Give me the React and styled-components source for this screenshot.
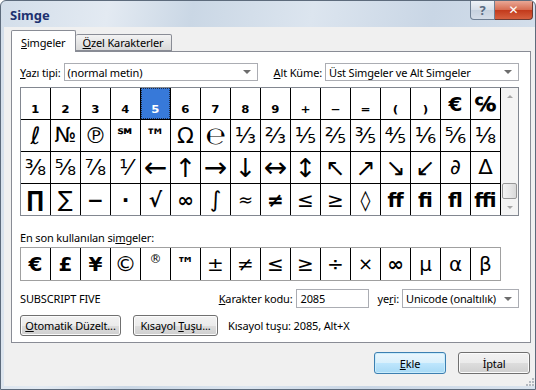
import styled, { createGlobalStyle } from 'styled-components'

const GlobalStyle = createGlobalStyle`
  body {
    margin: 0;
    background: #ffffff;
  }
`

const UI = `"Noto Sans", "DejaVu Sans", sans-serif`
const SYM = `"DejaVu Sans", sans-serif`

const Window = styled.div`
  width: 536px;
  height: 390px;
  box-sizing: border-box;
  display: flex;
  flex-direction: column;
  border: 1px solid #5d6b7c;
  border-radius: 6px 6px 0 0;
  background: linear-gradient(100deg, #d3deea 0%, #e3eaf2 18%, #cad7e5 32%, #dce5ef 52%, #c9d6e5 72%, #d9e3ee 100%);
  font-family: ${UI};
  font-size: 11px;
  letter-spacing: -0.15px;
  color: #000;
  overflow: hidden;
`
const TitleBar = styled.div`
  height: 26px;
  display: flex;
  align-items: flex-start;
  padding-left: 9px;
`
const Title = styled.div`
  margin-top: 5px;
  font-size: 13px;
  font-weight: bold;
  letter-spacing: 0;
  color: #1c3170;
`
const Caption = styled.div`
  margin-left: auto;
  margin-right: 2px;
  display: flex;
`
const HelpButton = styled.div`
  width: 25px;
  height: 19px;
  box-sizing: border-box;
  border: 1px solid #6e7f93;
  border-top: none;
  border-radius: 0 0 0 4px;
  background: linear-gradient(#eef2f7, #d6dee8 50%, #c6d1de 51%, #d4dde8);
  display: flex;
  align-items: center;
  justify-content: center;
  color: #596b82;
  font-size: 13px;
  font-weight: bold;
`
const CloseButton = styled.div`
  width: 38px;
  height: 19px;
  box-sizing: border-box;
  border: 1px solid #6e3a32;
  border-top: none;
  border-left: none;
  border-radius: 0 0 4px 0;
  background: linear-gradient(#e9a795, #d66b50 50%, #c2391b 51%, #d6603f);
  display: flex;
  align-items: center;
  justify-content: center;
  color: #fff;
  font-family: ${SYM};
  font-size: 12px;
  font-weight: bold;
`
const Client = styled.div`
  flex: 1;
  margin: 0 0 3px 3px;
  padding: 4px 4px 0 7px;
  background: #f0f0f0;
  display: flex;
  flex-direction: column;
`
const TabStrip = styled.div`
  display: flex;
  align-items: flex-end;
  height: 21px;
  margin-bottom: -1px;
  position: relative;
  z-index: 1;
`
const Tab = styled.div`
  box-sizing: border-box;
  height: ${(p) => (p.$active ? '22px' : '17px')};
  padding: ${(p) => (p.$active ? '2px 9px 0 9px' : '0 8px 0 7px')};
  margin-bottom: ${(p) => (p.$active ? '0' : '1px')};
  border: 1px solid #898c95;
  border-bottom: ${(p) => (p.$active ? 'none' : '1px solid #898c95')};
  border-left: ${(p) => (p.$active ? '1px solid #898c95' : 'none')};
  background: ${(p) => (p.$active ? '#ffffff' : 'linear-gradient(#f3f3f3, #e6e6e6 50%, #d9d9d9)')};
  display: flex;
  align-items: center;
  border-radius: 2px 2px 0 0;
`
const Panel = styled.div`
  border: 1px solid #898c95;
  background: #ffffff;
  padding: 11px 11px 6px 8px;
  display: flex;
  flex-direction: column;
`
const Row = styled.div`
  display: flex;
  align-items: center;
  height: ${(p) => p.$h || 18}px;
  margin-top: ${(p) => p.$mt || 0}px;
`
const Label = styled.span`
  white-space: nowrap;
  margin-left: ${(p) => (p.$auto ? 'auto' : `${p.$ml || 0}px`)};
  margin-right: ${(p) => p.$mr || 3}px;
  flex: ${(p) => (p.$grow ? 1 : 'none')};
`
const Combo = styled.div`
  box-sizing: border-box;
  width: ${(p) => p.$w}px;
  height: ${(p) => p.$h || 18}px;
  border: 1px solid #abadb3;
  background: #fff;
  display: flex;
  align-items: center;
  justify-content: space-between;
  padding: 0 6px 0 3px;
  white-space: nowrap;
`
const Arrow = styled.span`
  width: 0;
  height: 0;
  border-left: 4px solid transparent;
  border-right: 4px solid transparent;
  border-top: 4px solid #6d6d6d;
`
const Input = styled.div`
  box-sizing: border-box;
  width: ${(p) => p.$w}px;
  height: 19px;
  border: 1px solid #abadb3;
  background: #fff;
  padding: 0 4px;
  display: flex;
  align-items: center;
`
const CharBox = styled.div`
  margin-top: 6px;
  display: flex;
  border: 1px solid #828790;
  height: 129px;
  box-sizing: border-box;
`
const CharGrid = styled.div`
  display: grid;
  grid-template-columns: repeat(16, 29px);
  grid-auto-rows: 31px;
  gap: 1px;
  background: #000;
  border-right: 1px solid #000;
`
const Cell = styled.div`
  background: ${(p) => (p.$sel ? '#3779d9' : '#fff')};
  color: ${(p) => (p.$sel ? '#fff' : '#000')};
  outline: ${(p) => (p.$sel ? '1px dotted #1d2a44' : 'none')};
  outline-offset: -1px;
  display: flex;
  align-items: center;
  justify-content: center;
  font-family: ${SYM};
  font-size: ${(p) => p.$size || 20}px;
  font-weight: ${(p) => (p.$bold ? 'bold' : 'normal')};
  letter-spacing: 0;
  padding-top: ${(p) => p.$pt || 0}px;
  padding-bottom: ${(p) => p.$pb || 0}px;
  box-sizing: border-box;
  line-height: 1;
  overflow: hidden;
`
const Scrollbar = styled.div`
  width: 17px;
  background: #f4f4f4;
  display: flex;
  flex-direction: column;
  align-items: center;
`
const ScrollArrow = styled.div`
  height: 16px;
  display: flex;
  align-items: center;
  justify-content: center;
  &::after {
    content: '';
    border-left: 3px solid transparent;
    border-right: 3px solid transparent;
    ${(p) => (p.$up ? 'border-bottom' : 'border-top')}: 3px solid #a6a6a6;
  }
`
const Track = styled.div`
  flex: 1;
  display: flex;
  flex-direction: column;
  justify-content: flex-end;
`
const Thumb = styled.div`
  width: 15px;
  height: 16px;
  box-sizing: border-box;
  border: 1px solid #979797;
  border-radius: 2px;
  background: linear-gradient(90deg, #f3f3f3, #e8e8e8 50%, #d9d9d9);
`
const RecentLabel = styled.div`
  margin-top: 13px;
  height: 17px;
  display: flex;
  align-items: center;
`
const RecentBar = styled.div`
  margin-top: 1px;
  display: grid;
  grid-template-columns: repeat(16, 29px);
  grid-auto-rows: 32px;
  gap: 1px;
  background: #000;
  border: 1px solid #a0a0a0;
  width: max-content;
`
const Button = styled.div`
  box-sizing: border-box;
  width: ${(p) => p.$w}px;
  height: ${(p) => p.$h || 21}px;
  margin-right: ${(p) => p.$mr || 0}px;
  border: 1px solid ${(p) => (p.$def ? '#3c7fb1' : '#707070')};
  border-radius: 3px;
  box-shadow: inset 0 0 0 1px ${(p) => (p.$def ? '#c9ecfc' : '#fbfbfb')};
  background: ${(p) =>
    p.$def
      ? 'linear-gradient(#eaf6fd, #d9f0fc 50%, #bee6fd 51%, #a7d9f5)'
      : 'linear-gradient(#f2f2f2, #ebebeb 50%, #dddddd 51%, #cfcfcf)'};
  display: flex;
  align-items: center;
  justify-content: center;
  white-space: nowrap;
`
const DialogButtons = styled.div`
  margin-top: 9px;
  display: flex;
  justify-content: flex-end;
  gap: 12px;
  padding-right: 1px;
`
const Grip = styled.svg`
  align-self: flex-end;
  margin-top: auto;
  margin-right: -3px;
`

const row1 = ['₁', '₂', '₃', '₄', '₅', '₆', '₇', '₈', '₉', '₊', '₋', '₌', '₍', '₎']
// [glyph, size, bold]
const rows = [
  ['ℓ', 24], ['№', 21], ['℗', 22], ['℠', 20, 1], ['™', 20, 1], ['Ω', 22], ['℮', 24], ['⅓', 22],
  ['⅔', 22], ['⅕', 22], ['⅖', 22], ['⅗', 22], ['⅘', 22], ['⅙', 22], ['⅚', 22], ['⅛', 22],
  ['⅜', 22], ['⅝', 22], ['⅞', 22], ['⅟', 22], ['←', 28], ['↑', 26], ['→', 28], ['↓', 26],
  ['↔', 28], ['↕', 26], ['↖', 24], ['↗', 24], ['↘', 24], ['↙', 24], ['∂', 21], ['∆', 21],
  ['∏', 22, 1], ['∑', 22], ['−', 20, 1], ['∙', 20, 1], ['√', 20, 1], ['∞', 20, 1], ['∫', 22], ['≈', 18],
  ['≠', 20, 1], ['≤', 20], ['≥', 20], ['◊', 20, 1], ['ﬀ', 20, 1], ['ﬁ', 20, 1], ['ﬂ', 20, 1], ['ﬃ', 20, 1],
]
const recent = [
  ['€', 20, 1], ['£', 20, 1], ['¥', 20, 1], ['©', 22], ['®', 12, 0, 10], ['™', 18, 1], ['±', 20], ['≠', 20],
  ['≤', 20], ['≥', 20], ['÷', 20], ['×', 18], ['∞', 20, 1], ['µ', 20], ['α', 20], ['β', 20],
]

function App() {
  return (
    <Window>
      <GlobalStyle />
      <TitleBar>
        <Title>Simge</Title>
        <Caption>
          <HelpButton>?</HelpButton>
          <CloseButton>✕</CloseButton>
        </Caption>
      </TitleBar>
      <Client>
        <TabStrip>
          <Tab $active>
            <span><u>S</u>imgeler</span>
          </Tab>
          <Tab>
            <span><u>Ö</u>zel Karakterler</span>
          </Tab>
        </TabStrip>
        <Panel>
          <Row>
            <Label><u>Y</u>azı tipi:</Label>
            <Combo $w={194}>
              (normal metin)
              <Arrow />
            </Combo>
            <Label $auto><u>A</u>lt Küme:</Label>
            <Combo $w={194}>
              Üst Simgeler ve Alt Simgeler
              <Arrow />
            </Combo>
          </Row>
          <CharBox>
            <CharGrid>
              {row1.map((c, i) => (
                <Cell key={'a' + i} $size={19} $pt={5} $bold $sel={i === 4}>
                  {c}
                </Cell>
              ))}
              <Cell $bold>€</Cell>
              <Cell $bold>℅</Cell>
              {rows.map(([c, size, bold], i) => (
                <Cell key={'b' + i} $size={size} $bold={!!bold}>
                  {c}
                </Cell>
              ))}
            </CharGrid>
            <Scrollbar>
              <ScrollArrow $up />
              <Track>
                <Thumb />
              </Track>
              <ScrollArrow />
            </Scrollbar>
          </CharBox>
          <RecentLabel>
            <span>En son kullanılan si<u>m</u>geler:</span>
          </RecentLabel>
          <RecentBar>
            {recent.map(([c, size, bold, pb]) => (
              <Cell key={c} $size={size} $bold={!!bold} $pb={pb}>
                {c}
              </Cell>
            ))}
          </RecentBar>
          <Row $h={19} $mt={8}>
            <Label $grow>SUBSCRIPT FIVE</Label>
            <Label><u>K</u>arakter kodu:</Label>
            <Input $w={73}>2085</Input>
            <Label $ml={9}>ye<u>r</u>i:</Label>
            <Combo $w={117} $h={19}>
              Unicode (onaltılık)
              <Arrow />
            </Combo>
          </Row>
          <Row $h={21} $mt={7}>
            <Button $w={101} $mr={12}>
              <span><u>O</u>tomatik Düzelt...</span>
            </Button>
            <Button $w={85} $mr={10}>
              <span>Kısayol <u>T</u>uşu...</span>
            </Button>
            <span>Kısayol tuşu: 2085, Alt+X</span>
          </Row>
        </Panel>
        <DialogButtons>
          <Button $w={72} $h={22} $def>
            <span><u>E</u>kle</span>
          </Button>
          <Button $w={72} $h={22}>
            İptal
          </Button>
        </DialogButtons>
        <Grip width="10" height="10" viewBox="0 0 10 10">
          <g fill="#b4b9c0">
            <rect x="8" y="2" width="2" height="2" />
            <rect x="5" y="5" width="2" height="2" />
            <rect x="8" y="5" width="2" height="2" />
            <rect x="2" y="8" width="2" height="2" />
            <rect x="5" y="8" width="2" height="2" />
            <rect x="8" y="8" width="2" height="2" />
          </g>
        </Grip>
      </Client>
    </Window>
  )
}

export default App
